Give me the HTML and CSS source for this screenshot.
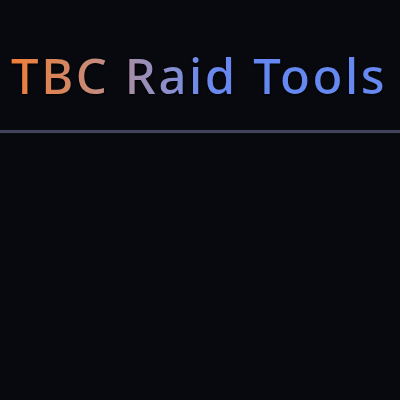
FILE: index.html
```html
<!DOCTYPE html>
<html lang="en">
<head>
<meta charset="utf-8">
<link rel="stylesheet" href="styles.css">
</head>
<body>
<header class="header">
  <h1 class="title">TBC Raid Tools</h1>
  <div class="divider"></div>
</header>
<main class="content"></main>
</body>
</html>
```
FILE: styles.css
```css
html, body {
  margin: 0;
  padding: 0;
  width: 400px;
  height: 400px;
  background: #07090f;
  overflow: hidden;
}
.header {
  display: flex;
  flex-direction: column;
  padding-top: 45px;
}
.title {
  margin: 0 0 0 11px;
  font-family: "Noto Sans", sans-serif;
  font-weight: 500;
  font-size: 49px;
  line-height: 60px;
  letter-spacing: 2.6px;
  white-space: nowrap;
  background: linear-gradient(90deg, #ef7e38 0px, #d6855c 50px, #c38c80 90px, #a08eaf 125px, #8a8fcf 160px, #6d89ec 190px, #6487f2 240px, #6889f0 390px);
  -webkit-background-clip: text;
  background-clip: text;
  color: transparent;
  width: max-content;
  filter: drop-shadow(0 1px 1px #000);
}
.divider {
  margin-top: 25px;
  height: 3px;
  background: #42425a;
  box-shadow: 0 0 1px #2a2a3a;
}
.content {
  flex: 1;
}
```
